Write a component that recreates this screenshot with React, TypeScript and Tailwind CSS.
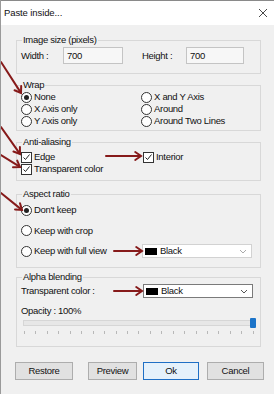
import React from 'react'

// annotation arrows drawn over the dialog: [x1, y1, x2, y2]
const arrows: number[][] = [
  [0, 62, 20, 93],
  [0, 127, 19, 154],
  [0, 155, 19, 167],
  [0, 193, 21, 210],
  [105, 156, 140, 156],
  [113, 251, 141, 251],
  [113, 291, 141, 291],
]

function Arrow({ x1, y1, x2, y2 }: { x1: number; y1: number; x2: number; y2: number }) {
  const a = Math.atan2(y2 - y1, x2 - x1)
  const L = 7
  const p1 = `${x2 - L * Math.cos(a - 0.6)},${y2 - L * Math.sin(a - 0.6)}`
  const p2 = `${x2 - L * Math.cos(a + 0.6)},${y2 - L * Math.sin(a + 0.6)}`
  return (
    <g stroke="#861a1a" strokeWidth={2} fill="none" strokeLinecap="round">
      <line x1={x1} y1={y1} x2={x2 - Math.cos(a)} y2={y2 - Math.sin(a)} />
      <polyline points={`${p1} ${x2},${y2} ${p2}`} strokeLinejoin="miter" />
    </g>
  )
}

function Radio({ label, checked = false }: { label: string; checked?: boolean }) {
  return (
    <div className="flex items-center h-full">
      <span className="ml-[1px] flex items-center justify-center w-[11px] h-[11px] rounded-full border border-[#333] bg-white">
        {checked && <span className="w-[5px] h-[5px] rounded-full bg-[#222]" />}
      </span>
      <span className="ml-[2px]">{label}</span>
    </div>
  )
}

function Check({ label }: { label: string }) {
  return (
    <div className="flex items-center h-full">
      <span className="ml-[1px] flex items-center justify-center w-[11px] h-[11px] border border-[#333] bg-white">
        <svg width="9" height="9" viewBox="0 0 9 9">
          <polyline points="1.5,4.5 3.5,6.5 7.5,1.5" fill="none" stroke="#222" strokeWidth="1" />
        </svg>
      </span>
      <span className="ml-[2px]">{label}</span>
    </div>
  )
}

function Group({ title, children, className = '' }: { title: string; children: React.ReactNode; className?: string }) {
  return (
    <fieldset className={`w-[245px] border border-[#d8d8d8] px-[3px] ${className}`}>
      <legend className="ml-[2px] px-[1px] leading-[12px]">{title}</legend>
      {children}
    </fieldset>
  )
}

function ColorSelect({ dark = false }: { dark?: boolean }) {
  return (
    <div
      className={`flex items-center w-[110px] h-[14px] bg-white border ${
        dark ? 'border-[#7a7a7a]' : 'border-[#d2d2d2]'
      }`}
    >
      <span className="ml-[2px] w-[12px] h-[7px] bg-black" />
      <span className="ml-[3px] flex-1">Black</span>
      <svg width="8" height="5" viewBox="0 0 8 5" className="mr-[4px]">
        <polyline points="1,1 4,4 7,1" fill="none" stroke={dark ? '#555' : '#aaa'} strokeWidth="1" />
      </svg>
    </div>
  )
}

function Button({ label, focused = false, className = '' }: { label: string; focused?: boolean; className?: string }) {
  return (
    <div
      className={`flex items-center justify-center h-[18px] border ${
        focused ? 'border-[#1f6fc5] bg-[#e5f1fb]' : 'border-[#adadad] bg-[#e1e1e1]'
      } ${className}`}
    >
      {label}
    </div>
  )
}

export default function App() {
  const ticks = Array.from({ length: 21 })

  return (
    <div
      className="relative w-[274px] h-[394px] bg-[#f0f0f0] text-[#111] text-[9.5px] leading-[12px] tracking-[-0.3px] overflow-hidden border-l border-[#9a9a9a]"
      style={{ fontFamily: '"Liberation Sans", Arial, sans-serif' }}
    >
      {/* title bar */}
      <div className="flex items-center justify-between h-[25px] bg-white border-t border-[#8a8a8a] pl-[3px] pr-[6px]">
        <span className="tracking-[-0.1px]">Paste inside...</span>
        <svg width="10" height="10" viewBox="0 0 10 10">
          <path d="M1 1 L9 9 M9 1 L1 9" stroke="#333" strokeWidth="0.9" />
        </svg>
      </div>

      <div className="flex flex-col pl-[15px]">
        {/* image size */}
        <Group title="Image size (pixels)" className="mt-[9px] pt-[1px] pb-[9px]">
          <div className="flex items-center h-[17px]">
            <span className="w-[43px] pl-[1px]">Width :</span>
            <span className="flex items-center w-[60px] h-[17px] pl-[3px] bg-[#f7f7f7] border border-[#c4c4c4]">700</span>
            <span className="ml-[19px] w-[44px]">Height :</span>
            <span className="flex items-center w-[58px] h-[17px] pl-[3px] bg-[#f7f7f7] border border-[#c4c4c4]">700</span>
          </div>
        </Group>

        {/* wrap */}
        <Group title="Wrap" className="mt-[5px] pb-[3px]">
          <div className="grid grid-cols-[120px_1fr] grid-rows-[12px_12px_12px]">
            <Radio label="None" checked />
            <Radio label="X and Y Axis" />
            <Radio label="X Axis only" />
            <Radio label="Around" />
            <Radio label="Y Axis only" />
            <Radio label="Around Two Lines" />
          </div>
        </Group>

        {/* anti-aliasing */}
        <Group title="Anti-aliasing" className="mt-[5px] pt-[3px] pb-[5px]">
          <div className="grid grid-cols-[122px_1fr] grid-rows-[12px_12px]">
            <Check label="Edge" />
            <Check label="Interior" />
            <Check label="Transparent color" />
          </div>
        </Group>

        {/* aspect ratio */}
        <Group title="Aspect ratio" className="mt-[7px] pb-[6px]">
          <div className="flex flex-col">
            <div className="h-[20px]">
              <Radio label="Don't keep" checked />
            </div>
            <div className="h-[21px]">
              <Radio label="Keep with crop" />
            </div>
            <div className="flex items-center h-[20px]">
              <div className="w-[122px] h-full">
                <Radio label="Keep with full view" />
              </div>
              <ColorSelect />
            </div>
          </div>
        </Group>

        {/* alpha blending */}
        <Group title="Alpha blending" className="mt-[3px] pb-[12px]">
          <div className="flex items-center h-[16px]">
            <span className="w-[123px] pl-[1px]">Transparent color :</span>
            <ColorSelect dark />
          </div>
          <div className="h-[12px] mt-[6px] pl-[1px]">Opacity : 100%</div>
          <div className="relative ml-[3px] w-[233px] h-[12px]">
            <div className="absolute left-0 right-[4px] top-[3px] h-[6px] bg-[#e7e7e7] border border-[#d6d6d6]" />
            <div className="absolute right-0 top-[1px] w-[6px] h-[10px] rounded-[1px] bg-[#1c74c9]" />
          </div>
          <div className="flex justify-between ml-[4px] w-[230px] mt-[2px] h-[3px]">
            {ticks.map((_, i) => (
              <span key={i} className="w-[1px] h-[3px] bg-[#b8b8b8]" />
            ))}
          </div>
        </Group>

        {/* buttons */}
        <div className="flex mt-[15px]">
          <Button label="Restore" className="-ml-[1px] w-[58px]" />
          <Button label="Preview" className="ml-[15px] w-[49px]" />
          <Button label="Ok" focused className="ml-[6px] w-[56px]" />
          <Button label="Cancel" className="ml-[8px] w-[57px]" />
        </div>
      </div>

      {/* red annotation arrows */}
      <svg className="absolute inset-0 pointer-events-none" width="274" height="394">
        {arrows.map(([x1, y1, x2, y2], i) => (
          <Arrow key={i} x1={x1} y1={y1} x2={x2} y2={y2} />
        ))}
      </svg>
    </div>
  )
}
